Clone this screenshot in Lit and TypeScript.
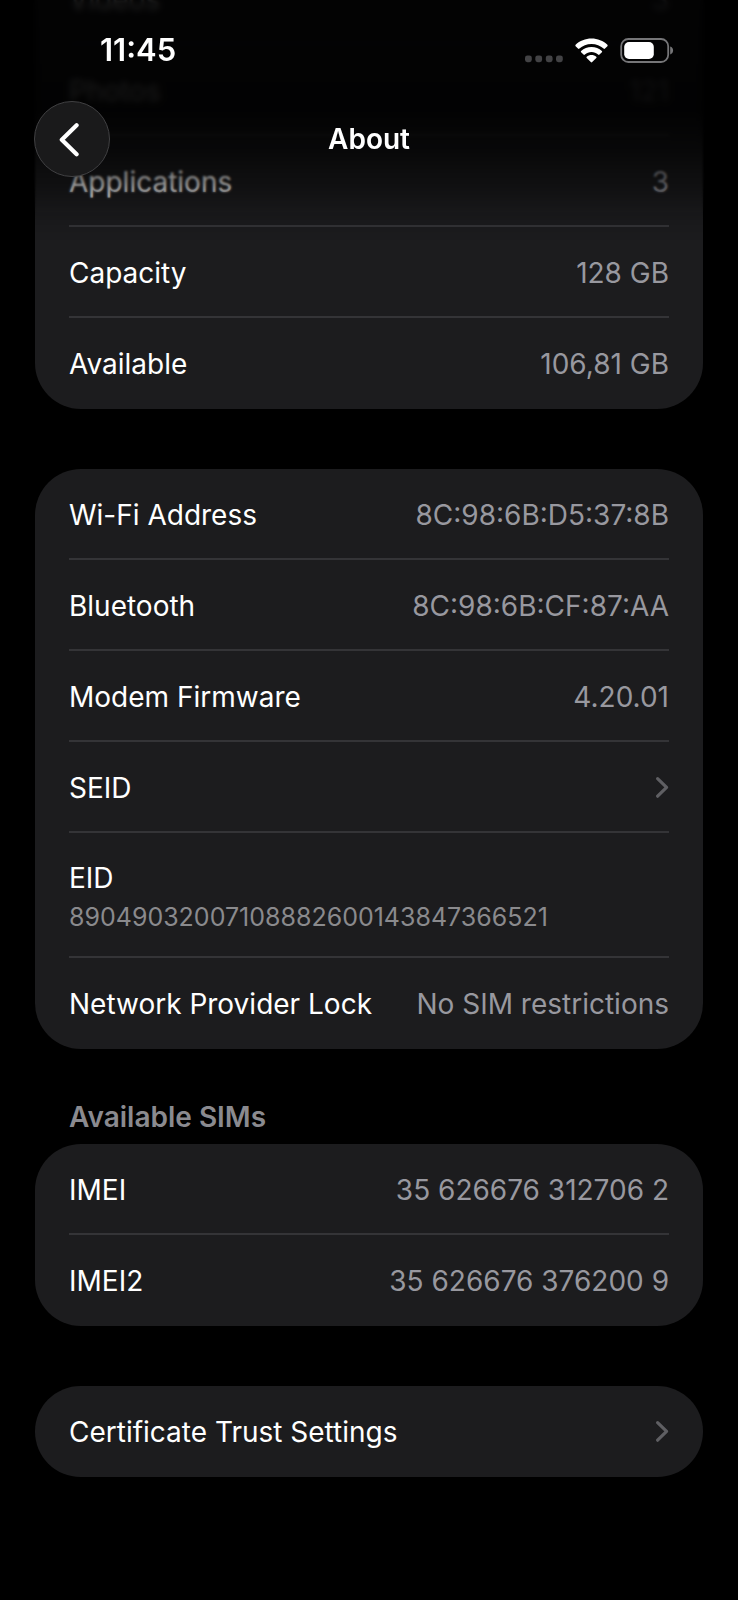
import { LitElement, html, css, svg, nothing } from "lit";
import { customElement, property } from "lit/decorators.js";

interface Row {
  label: string;
  value?: string;
  detail?: string;
  href?: string;
}

interface Group {
  title?: string;
  rows: Row[];
}

const GROUPS: Group[] = [
  {
    rows: [
      { label: "Videos", value: "3" },
      { label: "Photos", value: "121" },
      { label: "Applications", value: "3" },
      { label: "Capacity", value: "128 GB" },
      { label: "Available", value: "106,81 GB" },
    ],
  },
  {
    rows: [
      { label: "Wi-Fi Address", value: "8C:98:6B:D5:37:8B" },
      { label: "Bluetooth", value: "8C:98:6B:CF:87:AA" },
      { label: "Modem Firmware", value: "4.20.01" },
      { label: "SEID", href: "#seid" },
      { label: "EID", detail: "89049032007108882600143847366521" },
      { label: "Network Provider Lock", value: "No SIM restrictions" },
    ],
  },
  {
    title: "Available SIMs",
    rows: [
      { label: "IMEI", value: "35 626676 312706 2" },
      { label: "IMEI2", value: "35 626676 376200 9" },
    ],
  },
  { rows: [{ label: "Certificate Trust Settings", href: "#certificates" }] },
];

@customElement("status-bar")
export class StatusBar extends LitElement {
  static styles = css`
    :host {
      display: flex;
      align-items: center;
      justify-content: space-between;
      height: 100px;
      padding: 0 64px 0 100px;
      color: #fff;
    }
    .time {
      font-size: 31px;
      font-weight: 600;
      line-height: 40px;
    }
    .icons {
      display: flex;
      align-items: center;
      gap: 12px;
    }
    svg {
      display: block;
    }
  `;

  render() {
    return html`
      <time class="time">11:45</time>
      <div class="icons">
        <svg width="38" height="25" viewBox="0 0 38 25" fill="#434345" role="img" aria-label="No signal">
          ${[0, 10.3, 20.8, 31].map((x) => svg`<rect x=${x} y="17.4" width="6.8" height="6.8" rx="2.4" />`)}
        </svg>
        <svg width="33" height="25" viewBox="0 0 33 25" fill="#fff" role="img" aria-label="Wi-Fi">
          <path
            d="M16.5 0.6C22.6 0.6 28.2 2.9 32.4 6.8C32.8 7.2 32.8 7.8 32.4 8.2L30 10.6C29.6 11 29 11 28.6 10.6C25.4 7.6 21.2 5.9 16.5 5.9C11.8 5.9 7.6 7.6 4.4 10.6C4 11 3.4 11 3 10.6L0.6 8.2C0.2 7.8 0.2 7.2 0.6 6.8C4.8 2.9 10.4 0.6 16.5 0.6Z"
          />
          <path
            d="M16.5 8.9C20.5 8.9 24.1 10.4 26.9 12.9C27.3 13.3 27.3 13.9 26.9 14.3L24.5 16.6C24.1 17 23.5 17 23.1 16.6C21.3 15 19 14.1 16.5 14.1C14 14.1 11.7 15 9.9 16.6C9.5 17 8.9 17 8.5 16.6L6.1 14.3C5.7 13.9 5.7 13.3 6.1 12.9C8.9 10.4 12.5 8.9 16.5 8.9Z"
          />
          <path
            d="M16.5 17.1C18.3 17.1 20 17.7 21.3 18.8C21.7 19.2 21.7 19.7 21.3 20.1L17.2 24.1C16.8 24.5 16.2 24.5 15.8 24.1L11.7 20.1C11.3 19.7 11.3 19.2 11.7 18.8C13 17.7 14.7 17.1 16.5 17.1Z"
          />
        </svg>
        <svg width="54" height="25" viewBox="0 0 54 25" fill="none" role="img" aria-label="Battery">
          <rect x="1.2" y="1" width="47" height="23" rx="7.2" stroke="#767678" stroke-width="1.8" />
          <rect x="4.2" y="4" width="29.6" height="17" rx="4.8" fill="#fff" />
          <path d="M50.2 8.6C52 9.2 53.1 10.700 53.1 12.500C53.1 14.300 52 15.800 50.200 16.400Z" fill="#767678" />
        </svg>
      </div>
    `;
  }
}

@customElement("nav-bar")
export class NavBar extends LitElement {
  @property() heading = "";

  static styles = css`
    :host {
      display: grid;
      grid-template-columns: 76px 1fr 76px;
      align-items: center;
      padding: 1px 34px;
    }
    .back {
      display: grid;
      place-items: center;
      width: 76px;
      height: 76px;
      padding: 0;
      border: 1px solid #414143;
      border-radius: 50%;
      background: #1a1a1b;
      cursor: pointer;
    }
    .heading {
      margin: 0;
      color: #fff;
      font-size: 28px;
      font-weight: 600;
      line-height: 40px;
      text-align: center;
    }
  `;

  render() {
    return html`
      <button class="back" aria-label="Back">
        <svg width="36" height="36" viewBox="0 0 36 36" fill="none">
          <path
            d="M22.600 4.200L7.800 18.700L22.600 33.200"
            stroke="#fff"
            stroke-width="4.200"
            stroke-linecap="round"
            stroke-linejoin="round"
          />
        </svg>
      </button>
      <h1 class="heading">${this.heading}</h1>
    `;
  }
}

@customElement("settings-group")
export class SettingsGroup extends LitElement {
  @property({ attribute: false }) group: Group = { rows: [] };

  static styles = css`
    :host {
      display: block;
    }
    .title {
      margin: 0;
      padding: 0 34px 7px;
      color: #8a8a8f;
      font-size: 28px;
      font-weight: 600;
      line-height: 40px;
    }
    .card {
      margin: 0;
      padding: 0;
      list-style: none;
      border-radius: 46px;
      background: #1c1c1e;
      overflow: hidden;
    }
    .item {
      margin: 0 34px;
    }
    .item + .item {
      box-shadow: 0 -2px #343437;
    }
    .row {
      display: flex;
      align-items: center;
      justify-content: space-between;
      gap: 24px;
      min-height: 91px;
      color: #fff;
      font-size: 28px;
      line-height: 40px;
      text-decoration: none;
    }
    .stacked {
      flex-direction: column;
      align-items: flex-start;
      justify-content: flex-start;
      gap: 0;
      min-height: 0;
      padding: 25px 0 22px;
    }
    .value {
      color: #98989f;
      text-align: right;
    }
    .detail {
      color: #8a8a8d;
      font-size: 25px;
      line-height: 38px;
    }
  `;

  private renderRow(row: Row) {
    if (row.href) {
      return html`
        <a class="row" href=${row.href}>
          <span>${row.label}</span>
          <svg width="14" height="24" viewBox="0 0 14 24" fill="none">
            <path
              d="M2.6 2.600L11.600 11.400L2.600 20.200"
              stroke="#5f5f63"
              stroke-width="3.200"
              stroke-linecap="round"
              stroke-linejoin="round"
            />
          </svg>
        </a>
      `;
    }
    if (row.detail) {
      return html`
        <div class="row stacked">
          <span>${row.label}</span>
          <span class="detail">${row.detail}</span>
        </div>
      `;
    }
    return html`
      <div class="row">
        <span>${row.label}</span>
        <span class="value">${row.value}</span>
      </div>
    `;
  }

  render() {
    const { title, rows } = this.group;
    return html`
      ${title ? html`<h2 class="title">${title}</h2>` : nothing}
      <ul class="card">
        ${rows.map((row) => html`<li class="item">${this.renderRow(row)}</li>`)}
      </ul>
    `;
  }
}

@customElement("app-root")
export class AppRoot extends LitElement {
  static styles = css`
    :host {
      display: block;
      position: relative;
      box-sizing: border-box;
      min-height: 100vh;
      overflow: hidden;
      background: #000;
      font-family: Inter, "Liberation Sans", sans-serif;
    }
    /* The list is scrolled up underneath the floating header. */
    .list {
      margin-top: -46px;
      padding: 0 35px 60px;
    }
    .group + .group {
      margin-top: 60px;
    }
    .group + .titled {
      margin-top: 48px;
    }
    .header {
      position: absolute;
      inset: 0 0 auto;
    }
    .veil {
      position: absolute;
      inset: 0 0 auto;
      pointer-events: none;
    }
    .soft {
      height: 220px;
      backdrop-filter: blur(1px);
      mask-image: linear-gradient(#000 180px, transparent 220px);
    }
    .heavy {
      height: 150px;
      backdrop-filter: blur(3px);
      mask-image: linear-gradient(#000 110px, transparent 150px);
    }
    .shade {
      height: 240px;
      background: linear-gradient(
        rgba(0, 0, 0, 0.88) 0,
        rgba(0, 0, 0, 0.9) 110px,
        rgba(0, 0, 0, 0.7) 150px,
        rgba(0, 0, 0, 0.43) 182px,
        rgba(0, 0, 0, 0.14) 210px,
        rgba(0, 0, 0, 0) 240px
      );
    }
    .bars {
      position: relative;
    }
  `;

  render() {
    return html`
      <main class="list">
        ${GROUPS.map(
          (group) => html`
            <settings-group class="group ${group.title ? "titled" : ""}" .group=${group}></settings-group>
          `,
        )}
      </main>
      <header class="header">
        <div class="veil soft"></div>
        <div class="veil heavy"></div>
        <div class="veil shade"></div>
        <div class="bars">
          <status-bar></status-bar>
          <nav-bar heading="About"></nav-bar>
        </div>
      </header>
    `;
  }
}
